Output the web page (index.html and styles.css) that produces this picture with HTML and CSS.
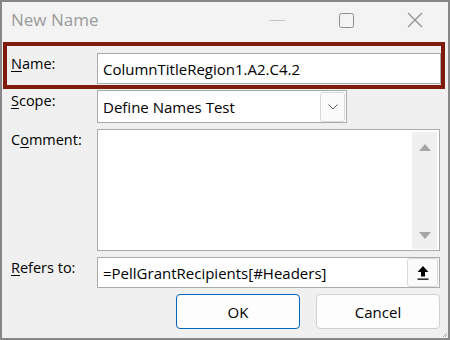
FILE: index.html
```html
<!DOCTYPE html>
<html lang="en">
<head>
    <meta charset="UTF-8">
    <title>New Name</title>
    <link rel="stylesheet" href="styles.css">
</head>
<body>
    <div class="window">
        <div class="titlebar">
            <span class="title">New Name</span>
            <div class="controls">
                <svg width="16" height="16" viewBox="0 0 16 16"><line x1="0" y1="8.5" x2="16" y2="8.5" stroke="#c4c4c4" stroke-width="1"/></svg>
                <svg width="16" height="16" viewBox="0 0 16 16"><rect x="1.5" y="1.5" width="14" height="14" rx="2" fill="none" stroke="#8c8c8c" stroke-width="1"/></svg>
                <svg width="16" height="16" viewBox="0 0 16 16"><path d="M1 1 L15 15 M15 1 L1 15" stroke="#8c8c8c" stroke-width="1.1" fill="none"/></svg>
            </div>
        </div>

        <div class="content">
            <div class="row row-name">
                <label class="label"><u>N</u>ame:</label>
                <div class="field field-name">ColumnTitleRegion1.A2.C4.2</div>
            </div>

            <div class="row row-scope">
                <label class="label"><u>S</u>cope:</label>
                <div class="field field-scope">
                    <span class="field-text">Define Names Test</span>
                    <span class="drop-btn">
                        <svg width="10" height="6" viewBox="0 0 10 6"><path d="M0.5 0.5 L5 5 L9.5 0.5" fill="none" stroke="#5a5a5a" stroke-width="1"/></svg>
                    </span>
                </div>
            </div>

            <div class="row row-comment">
                <label class="label">C<u>o</u>mment:</label>
                <div class="field field-comment">
                    <div class="scrollbar">
                        <svg width="12" height="7" viewBox="0 0 12 7"><path d="M0 7 L6 0 L12 7 Z" fill="#a6a6a6"/></svg>
                        <svg width="12" height="7" viewBox="0 0 12 7"><path d="M0 0 L12 0 L6 7 Z" fill="#a6a6a6"/></svg>
                    </div>
                </div>
            </div>

            <div class="row row-refers">
                <label class="label"><u>R</u>efers to:</label>
                <div class="field field-refers">
                    <span class="field-text">=PellGrantRecipients[#Headers]</span>
                    <span class="collapse-btn">
                        <svg width="12" height="14" viewBox="0 0 12 14"><path d="M6 0 L11.5 6 L8 6 L8 10.5 L4 10.5 L4 6 L0.5 6 Z" fill="#000"/><rect x="0.5" y="12.5" width="11" height="1.3" fill="#000"/></svg>
                    </span>
                </div>
            </div>

            <div class="actions">
                <button type="button" class="btn btn-default">OK</button>
                <button type="button" class="btn">Cancel</button>
            </div>
        </div>

        <svg class="grip" width="6" height="6" viewBox="0 0 6 6"><path d="M5 1 L1 5 M5 3 L3 5" stroke="#a8a8a8" stroke-width="1"/></svg>
    </div>
</body>
</html>
```

FILE: styles.css
```css
* {
    margin: 0;
    padding: 0;
    box-sizing: border-box;
    font-family: 'Open Sans', 'Noto Sans', sans-serif;
}

body {
    background-color: #f0f0f0;
}

.window {
    position: relative;
    width: 450px;
    height: 340px;
    border: 2px solid #878787;
    background: #f0f0f0;
}

.titlebar {
    display: flex;
    align-items: center;
    height: 40px;
    padding: 0 25px 5px 9px;
    background: #f3f3f3;
}

.title {
    color: #9b9b9b;
    font-size: 17px;
}

.controls {
    display: flex;
    align-items: center;
    gap: 53px;
    margin-left: auto;
}

.row {
    display: grid;
    grid-template-columns: 86px 1fr;
    padding: 0 8px 0 9px;
}

.row-name {
    margin: 0 3px 0 1px;
    padding: 7px 0 1px 4px;
    border: 4px solid #7f1b0b;
}

.row-scope {
    margin-top: 1px;
    grid-template-columns: 86px 250px;
}

.row-comment,
.row-refers {
    margin-top: 6px;
}

.label {
    padding-top: 1px;
    font-size: 14.5px;
    line-height: 20px;
    color: #000;
}

.label u {
    text-underline-offset: 2px;
}

.field {
    display: flex;
    align-items: center;
    background: white;
    border: 1px solid #ababab;
    font-size: 15px;
    color: #000;
    padding-left: 5px;
}

.field-name {
    height: 31px;
}

.field-scope {
    height: 33px;
    padding-right: 1px;
}

.field-comment {
    height: 122px;
    justify-content: flex-end;
    align-items: stretch;
    padding: 2px 2px 1px 0;
}

.field-refers {
    height: 31px;
    padding-right: 1px;
}

.drop-btn,
.collapse-btn {
    display: flex;
    align-items: center;
    justify-content: center;
    margin-left: auto;
    background: #fbfbfb;
    border: 1px solid #d9d9d9;
    border-radius: 3px;
}

.drop-btn {
    width: 25px;
    height: 30px;
}

.collapse-btn {
    width: 31px;
    height: 29px;
}

.scrollbar {
    display: flex;
    flex-direction: column;
    justify-content: space-between;
    align-items: center;
    width: 25px;
    padding: 12px 0 10px;
    background: #f0f0f0;
}

.actions {
    display: flex;
    justify-content: flex-end;
    gap: 16px;
    margin-top: 6px;
    padding-right: 8px;
}

.btn {
    width: 124px;
    height: 35px;
    background: #fdfdfd;
    border: 1px solid #d0d0d0;
    border-radius: 4px;
    font-size: 15px;
    color: #000;
}

.btn-default {
    border-color: #0067c0;
}

.grip {
    position: absolute;
    right: 0;
    bottom: 0;
}
```
